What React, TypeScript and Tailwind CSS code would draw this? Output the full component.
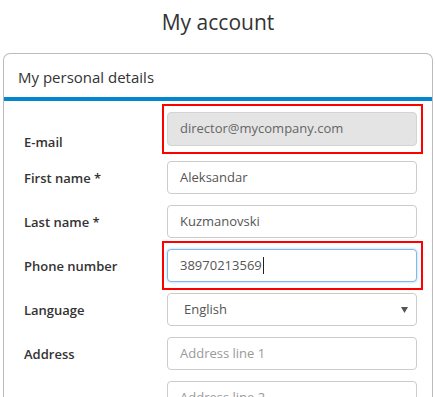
import type { ReactElement, ReactNode } from "react";

const font = { fontFamily: '"Open Sans", "Noto Sans", sans-serif' };

type Tone = "plain" | "disabled" | "focus" | "placeholder";

const toneClass: Record<Tone, string> = {
  plain: "border-[#ccc] bg-white text-[#555]",
  disabled: "border-[#d4d4d4] bg-[#e4e4e4] text-[#666]",
  focus: "border-[#80b8ea] bg-white text-[#555] shadow-[0_0_3px_rgba(102,175,233,0.6)]",
  placeholder: "border-[#ccc] bg-white text-[#9a9a9a]"
};

function Field({
  label,
  children,
  labelTop = "mt-[7px]"
}: {
  label: string;
  children: ReactNode;
  labelTop?: string;
}): ReactElement {
  return (
    <div className="flex items-start">
      <div
        className={`w-[143px] shrink-0 text-[13px] leading-[20px] font-semibold text-[#333] ${labelTop}`}
      >
        {label}
      </div>
      <div className="relative w-[250px]">{children}</div>
    </div>
  );
}

function Box({
  children,
  tone = "plain",
  tall = false,
  pad = "px-[12px]"
}: {
  children: ReactNode;
  tone?: Tone;
  tall?: boolean;
  pad?: string;
}): ReactElement {
  return (
    <div
      className={`flex items-center rounded-[4px] border text-[13px] ${tall ? "h-[34px]" : "h-[33px]"} ${pad} ${toneClass[tone]}`}
    >
      {children}
    </div>
  );
}

// red annotation frame drawn over the highlighted fields
function Mark(): ReactElement {
  return (
    <div className="pointer-events-none absolute -bottom-[8px] -left-[5px] -right-[6px] -top-[8px] border-2 border-[#f00]" />
  );
}

export default function App(): ReactElement {
  return (
    <div className="h-[397px] overflow-hidden bg-white pt-[8px]" style={font}>
      <h1 className="text-center text-[21px] leading-[28px] text-[#333]">My account</h1>
      <div className="mx-[3px] mt-[17px] rounded-t-[7px] border border-b-0 border-[#bbb]">
        <div className="h-[43px] px-[14px] pt-[13px] text-[15px] leading-[20px] text-[#333]">
          My personal details
        </div>
        <div className="h-[4px] bg-[#0587cf]" />
        <div className="flex flex-col gap-[11px] pl-[20px] pt-[11px]">
          {/* label sits lower than the box here, so the row height is pinned to the box */}
          <div className="mb-[4px] h-[34px]">
            <Field label="E-mail" labelTop="mt-[20px]">
              <Box tone="disabled" tall>
                director@mycompany.com
              </Box>
              <Mark />
            </Field>
          </div>
          <Field label="First name *">
            <Box>Aleksandar</Box>
          </Field>
          <Field label="Last name *">
            <Box>Kuzmanovski</Box>
          </Field>
          <Field label="Phone number">
            <Box tone="focus">
              38970213569
              <span className="ml-[1px] inline-block h-[17px] w-[1px] bg-[#222]" />
            </Box>
            <Mark />
          </Field>
          <Field label="Language">
            <Box pad="pl-[16px] pr-[8px]">
              <span className="flex-1">English</span>
              <svg width="7" height="6" viewBox="0 0 7 6" aria-hidden="true">
                <path d="M0 0h7L3.5 6z" fill="#555" />
              </svg>
            </Box>
          </Field>
          <Field label="Address">
            <Box tone="placeholder">Address line 1</Box>
          </Field>
          <Field label="">
            <Box tone="placeholder">Address line 2</Box>
          </Field>
        </div>
      </div>
    </div>
  );
}
